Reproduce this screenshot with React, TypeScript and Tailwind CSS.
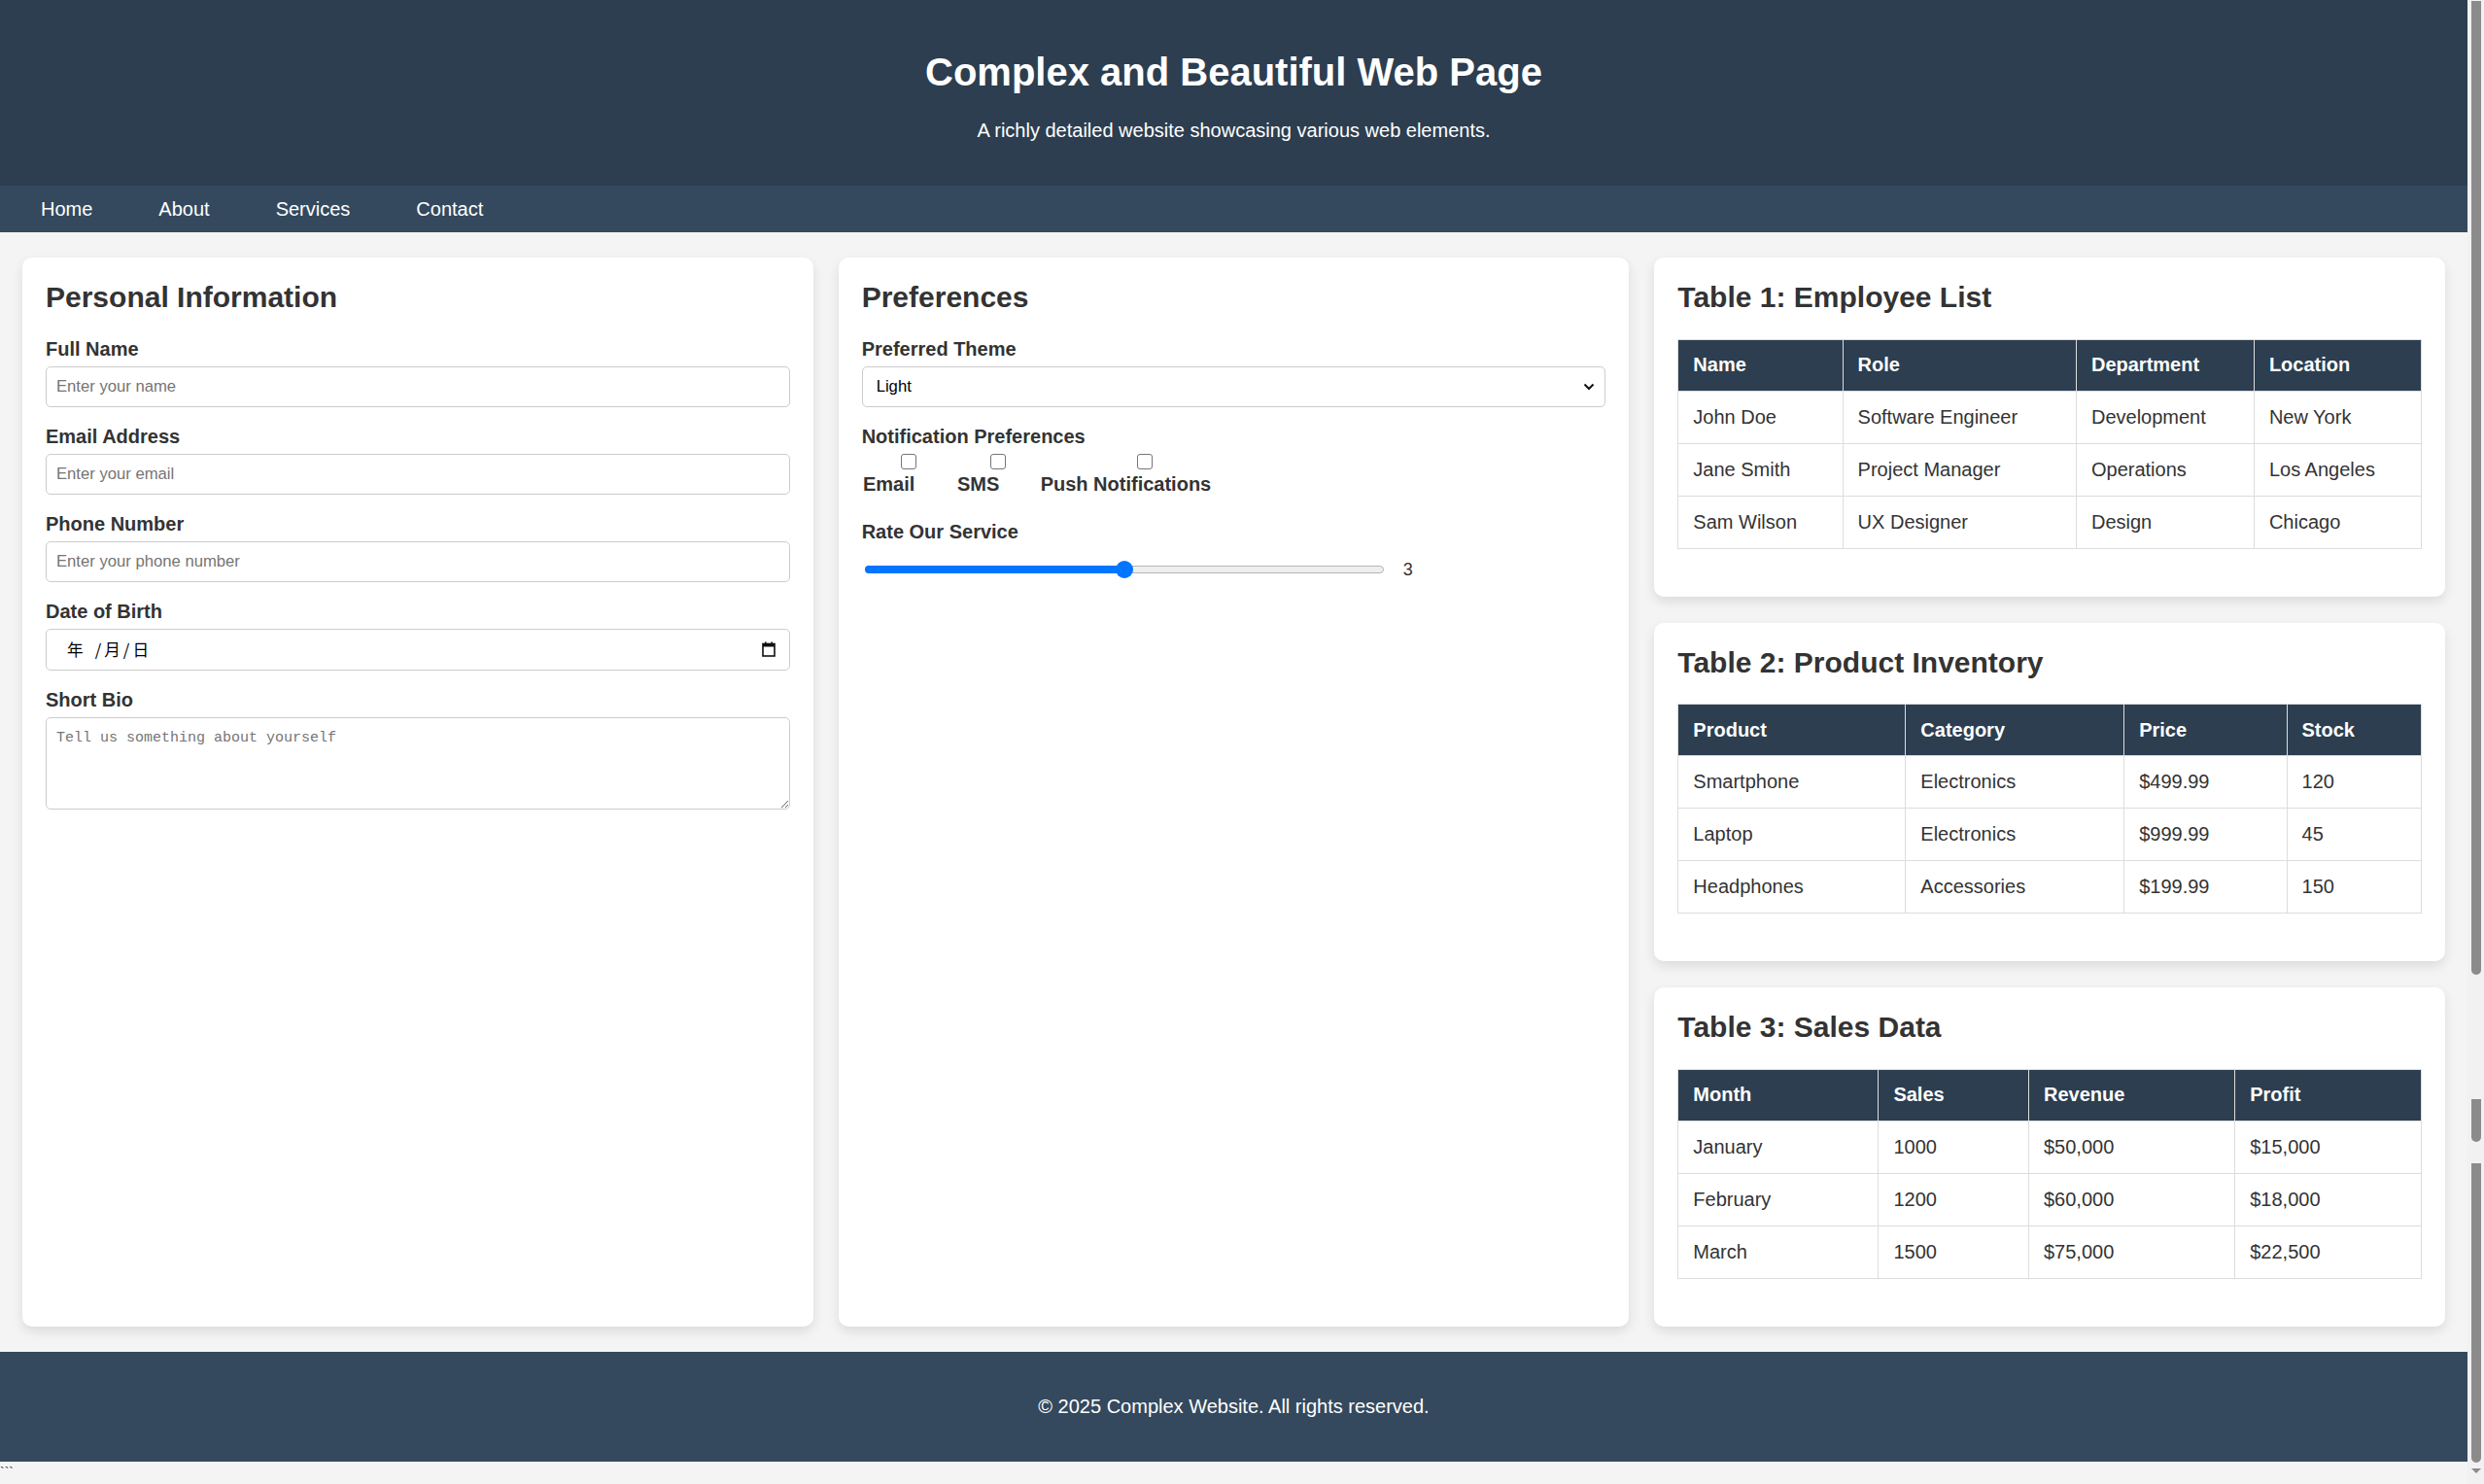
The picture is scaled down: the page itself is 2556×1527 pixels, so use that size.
import React from 'react';

const employees = [
  ['John Doe', 'Software Engineer', 'Development', 'New York'],
  ['Jane Smith', 'Project Manager', 'Operations', 'Los Angeles'],
  ['Sam Wilson', 'UX Designer', 'Design', 'Chicago'],
];

const products = [
  ['Smartphone', 'Electronics', '$499.99', '120'],
  ['Laptop', 'Electronics', '$999.99', '45'],
  ['Headphones', 'Accessories', '$199.99', '150'],
];

const sales = [
  ['January', '1000', '$50,000', '$15,000'],
  ['February', '1200', '$60,000', '$18,000'],
  ['March', '1500', '$75,000', '$22,500'],
];

const cardClass = 'bg-white rounded-[10px] shadow-[0_5px_12px_rgba(0,0,0,0.1)] p-[24px]';
const headingClass = 'text-[30px] leading-[34.5px] font-bold text-[#333] mb-[24px]';
const labelClass = 'block font-bold leading-[23px] mb-[6px]';
const inputClass =
  'block w-full h-[42px] border border-[#ccc] rounded-[5px] px-[10px] mb-[19px] text-[16.67px] text-[#333] bg-white placeholder:text-[#757575] outline-none';

const DataTable: React.FC<{ title: string; head: string[]; rows: string[][] }> = ({ title, head, rows }) => (
  <div className={cardClass}>
    <h2 className="text-[30px] leading-[34.5px] font-bold text-[#333] mb-[25px]">{title}</h2>
    <table className="w-full border-collapse mb-[25px]">
      <thead>
        <tr>
          {head.map((h) => (
            <th key={h} className="bg-[#2c3e50] text-white font-bold text-left px-[15px] py-[14.5px] leading-[23px] border border-[#ddd]">
              {h}
            </th>
          ))}
        </tr>
      </thead>
      <tbody>
        {rows.map((r, i) => (
          <tr key={i}>
            {r.map((c, j) => (
              <td key={j} className="px-[15px] py-[15px] leading-[23px] border border-[#ddd]">
                {c}
              </td>
            ))}
          </tr>
        ))}
      </tbody>
    </table>
  </div>
);

const Check: React.FC<{ label: string }> = ({ label }) => (
  <div className="flex flex-col items-center">
    <div className="pl-[40px] h-[16px] mb-[4px]">
      <div className="w-[16px] h-[16px] border border-[#767676] rounded-[3px] bg-white" />
    </div>
    <span className="font-bold leading-[23px]">{label}</span>
  </div>
);

export default function App() {
  return (
    <div className="flex bg-[#f4f4f4] text-[20px] text-[#333] font-['Liberation_Sans',Arial,sans-serif]">
      <div className="flex-1 min-w-0">
        <header className="bg-[#2c3e50] text-white text-center py-[25px]">
          <h1 className="text-[40px] leading-[46px] font-bold my-[26px]">Complex and Beautiful Web Page</h1>
          <p className="leading-[23px] mb-[20px]">A richly detailed website showcasing various web elements.</p>
        </header>

        <nav className="bg-[#34495e] flex pl-[8px] py-[12.5px]">
          {['Home', 'About', 'Services', 'Contact'].map((item) => (
            <a key={item} href="#" className="text-white px-[34px] leading-[23px]">
              {item}
            </a>
          ))}
        </nav>

        <main className="grid grid-cols-3 gap-[26px] px-[23px] py-[26px]">
          <div className={cardClass}>
            <h2 className={headingClass}>Personal Information</h2>
            <label className={labelClass}>Full Name</label>
            <input className={inputClass} placeholder="Enter your name" />
            <label className={labelClass}>Email Address</label>
            <input className={inputClass} placeholder="Enter your email" />
            <label className={labelClass}>Phone Number</label>
            <input className={inputClass} placeholder="Enter your phone number" />
            <label className={labelClass}>Date of Birth</label>
            <div className="flex items-center justify-between w-full h-[43px] border border-[#ccc] rounded-[5px] pl-[21px] pr-[14px] mb-[19px] bg-white">
              <span className="flex items-center text-[16.67px] text-black font-['Noto_Sans_CJK_SC',sans-serif]">
                <span>年</span>
                <span className="ml-[12px]">/</span>
                <span className="ml-[3px]">月</span>
                <span className="ml-[3px]">/</span>
                <span className="ml-[3px]">日</span>
              </span>
              <svg width="14" height="16" viewBox="0 0 14 16">
                <rect x="1" y="2.5" width="12" height="12.5" fill="none" stroke="#111" strokeWidth="1.6" />
                <rect x="1" y="2.5" width="12" height="3" fill="#111" />
                <rect x="3" y="0.5" width="1.6" height="3" fill="#111" />
                <rect x="9.4" y="0.5" width="1.6" height="3" fill="#111" />
              </svg>
            </div>
            <label className={labelClass}>Short Bio</label>
            <textarea
              className="block w-full h-[95px] border border-[#ccc] rounded-[5px] px-[10px] py-[10px] text-[15px] font-['Liberation_Mono',monospace] placeholder:text-[#757575] outline-none"
              placeholder="Tell us something about yourself"
            />
          </div>

          <div className={cardClass}>
            <h2 className={headingClass}>Preferences</h2>
            <label className={labelClass}>Preferred Theme</label>
            <div className="flex items-center justify-between w-full h-[42px] border border-[#ccc] rounded-[5px] pl-[14px] pr-[10px] mb-[19px] bg-white">
              <span className="text-[16.67px] text-black">Light</span>
              <svg width="12" height="8" viewBox="0 0 12 8">
                <path d="M1.5 1.5 L6 6 L10.5 1.5" fill="none" stroke="#111" strokeWidth="2" />
              </svg>
            </div>
            <label className={labelClass}>Notification Preferences</label>
            <div className="flex gap-[36px] mb-[26px]">
              <Check label="Email" />
              <Check label="SMS" />
              <Check label="Push Notifications" />
            </div>
            <label className={labelClass}>Rate Our Service</label>
            <div className="flex items-center h-[43px] gap-[20px]">
              <div className="relative w-[534px] h-[8px] ml-[3px] rounded-full bg-[#efefef] border border-[#b5b5b5]">
                <div className="absolute left-[-1px] top-[-1px] h-[8px] w-[50%] rounded-full bg-[#0075ff]" />
                <div className="absolute left-[50%] top-1/2 -translate-x-1/2 -translate-y-1/2 w-[18px] h-[18px] rounded-full bg-[#0075ff]" />
              </div>
              <span className="text-[18px]">3</span>
            </div>
          </div>

          <div className="flex flex-col gap-[27px]">
            <DataTable title="Table 1: Employee List" head={['Name', 'Role', 'Department', 'Location']} rows={employees} />
            <DataTable title="Table 2: Product Inventory" head={['Product', 'Category', 'Price', 'Stock']} rows={products} />
            <DataTable title="Table 3: Sales Data" head={['Month', 'Sales', 'Revenue', 'Profit']} rows={sales} />
          </div>
        </main>

        <footer className="bg-[#34495e] text-white text-center py-[25px]">
          <p className="my-[20px] leading-[23px]">© 2025 Complex Website. All rights reserved.</p>
        </footer>
        <div className="leading-[23px] text-[14px]">```</div>
      </div>

      {/* window scrollbar */}
      <div className="w-[17px] shrink-0 bg-[#f1f1f1] flex flex-col items-center pt-[1px]">
        <div className="w-[10px] h-[1002px] rounded-b-[5px] bg-[#8b8b8b]" />
        <div className="w-[10px] h-[44px] mt-[128px] rounded-b-[5px] bg-[#8b8b8b]" />
        <div className="w-[10px] h-[308px] mt-[22px] rounded-b-[5px] bg-[#8b8b8b]" />
        <div className="mt-[6px] w-0 h-0 border-l-[5px] border-r-[5px] border-t-[5px] border-l-transparent border-r-transparent border-t-[#8b8b8b]" />
      </div>
    </div>
  );
}
